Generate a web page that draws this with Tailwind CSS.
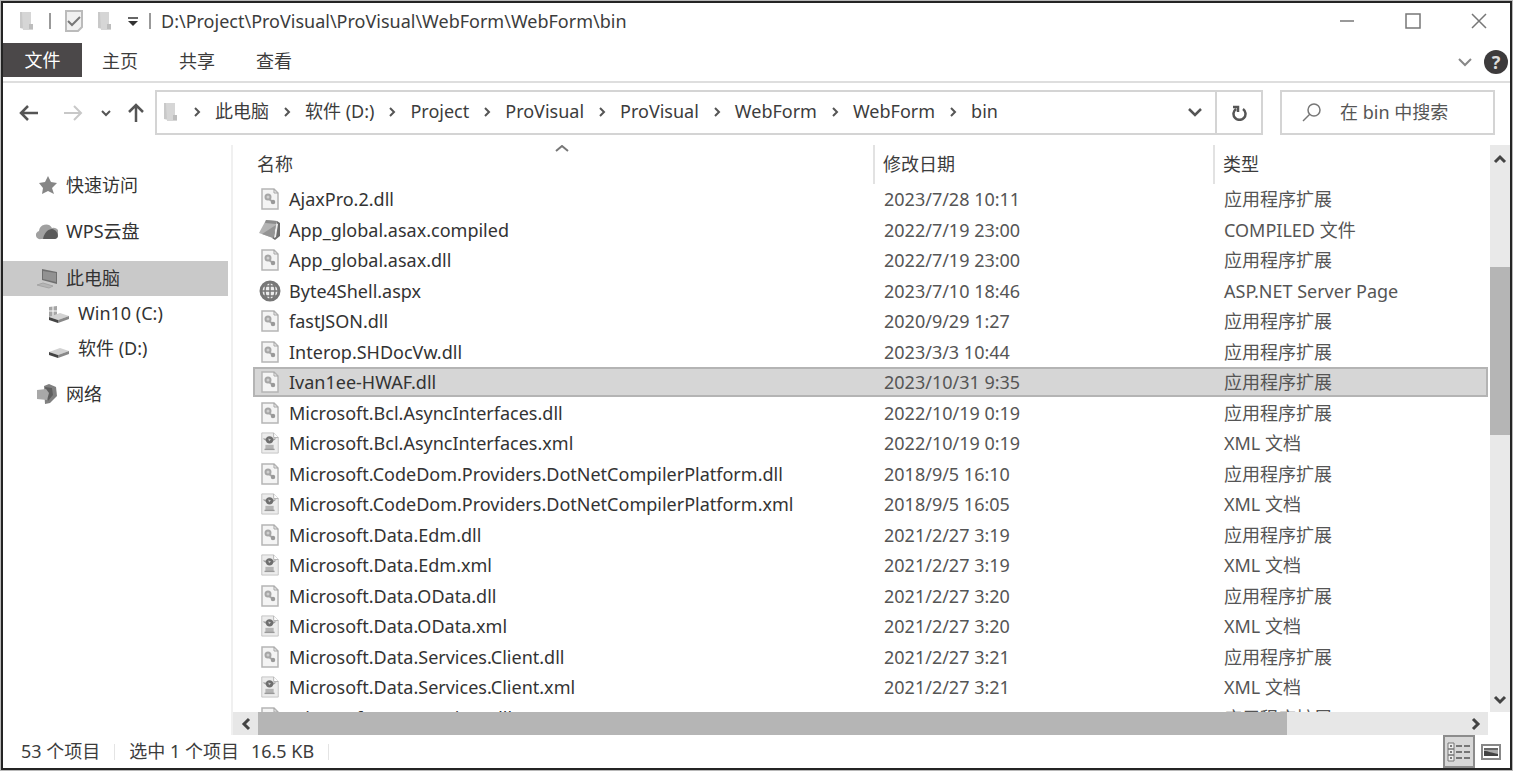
<!DOCTYPE html>
<html lang="zh-CN">
<head>
  <meta charset="utf-8"/>
  <meta name="viewport" content="width=device-width, initial-scale=1.0"/>
  <title>bin</title>
  <script src="https://cdn.jsdelivr.net/npm/@tailwindcss/browser@4"></script>
</head>
<body class="bg-[#b8b8b8] p-px text-[#3c3c3c] text-[18px] font-['Noto_Sans','Noto_Sans_CJK_SC',sans-serif]">

<svg class="hidden">
  <symbol id="icon-folder" viewBox="0 0 16 20">
    <path d="M1 1l9 0v18l-9-2z" fill="#c9c9c9"/>
    <path d="M3 1h9v12h2v6H4z" fill="#d6d6d6"/>
    <path d="M10 13h4v5h-4z" fill="#bdbdbd"/>
  </symbol>
  <symbol id="icon-dll" viewBox="0 0 22 22">
    <path d="M3 1h12l4 4v16H3z" fill="#f4f4f4" stroke="#b5b5b5" stroke-width="1.500"/>
    <path d="M15 1v4h4" fill="none" stroke="#a5a5a5"/>
    <circle cx="9" cy="9" r="2.500" fill="#cfcfcf" stroke="#a6a6a6" stroke-width="2"/>
    <path d="M10 11l4 3" stroke="#a6a6a6" stroke-width="2"/>
    <circle cx="14" cy="14" r="1.500" fill="#999" stroke="#9a9a9a" stroke-width="1.500"/>
  </symbol>
  <symbol id="icon-xml" viewBox="0 0 20 24">
    <path d="M1 1h13l5 5v17H1z" fill="#ececec" stroke="#c2c2c2"/>
    <path d="M14 1v5h5" fill="#fff" stroke="#b0b0b0"/>
    <path d="M2 7h15l-4 3H6z" fill="#9a9a9a"/>
    <circle cx="9.500" cy="8.500" r="4" fill="#6e6e6e"/>
    <path d="M8 7l3 1-2 2z" fill="#c8c8c8"/>
    <path d="M5 14h9v5H5z" fill="#b4b4b4"/>
    <path d="M4 19h11" stroke="#999" stroke-width="1.500"/>
  </symbol>
  <symbol id="icon-compiled" viewBox="0 0 22 22">
    <path d="M18 2l3 2v13l-5 4-3-2z" fill="#6c6c6c"/>
    <path d="M17 4l2 1-2 13-2 1z" fill="#eee"/>
    <path d="M7 1l11 1-4 17-14-5z" fill="#b4b4b4"/>
    <path d="M17 6l-3 13-11-4z" fill="#949494"/>
    <path d="M7 1l11 1-1 3-11-1z" fill="#8c8c8c"/>
  </symbol>
  <symbol id="icon-web" viewBox="0 0 22 22">
    <circle cx="11" cy="11" r="9" fill="#ececec" stroke="#777" stroke-width="3"/>
    <path d="M11 2v18M2 11h18M4 6h14M4 16h14" stroke="#777" stroke-width="1.500"/>
    <ellipse cx="11" cy="11" rx="5" ry="9" fill="none" stroke="#777" stroke-width="1.500"/>
  </symbol>
  <symbol id="icon-crumb" viewBox="0 0 8 10">
    <path d="M2 1l4 4-4 4" fill="none" stroke="#555" stroke-width="2"/>
  </symbol>
</svg>

<div class="flex h-[calc(100vh-2px)] flex-col overflow-hidden border-2 border-[#242424] bg-white">

  <!-- title bar -->
  <header class="flex h-10 shrink-0 items-center pb-1 pl-4">
    <svg class="h-5 w-4"><use href="#icon-folder"/></svg>
    <span class="ml-3.5 h-4 w-0.5 bg-[#999]"></span>
    <svg class="ml-3.5 h-[22px] w-[18px]" viewBox="0 0 18 22">
      <path d="M1 1h16v16l-4 4H1z" fill="#f0f0f0" stroke="#bbb" stroke-width="2"/>
      <path d="M3 11l4 4 8-8" fill="none" stroke="#777" stroke-width="2"/>
    </svg>
    <svg class="ml-3.5 h-5 w-4"><use href="#icon-folder"/></svg>
    <svg class="ml-3.5 h-3 w-3" viewBox="0 0 12 12"><path d="M1 3h10" stroke="#333" stroke-width="1.500"/><path d="M1 6h10l-5 5z" fill="#333"/></svg>
    <span class="ml-2.5 h-4 w-0.5 bg-[#999]"></span>
    <h1 class="ml-2.5 text-[18px]">D:\Project\ProVisual\ProVisual\WebForm\WebForm\bin</h1>
    <div class="ml-auto flex items-center gap-[50px] pr-[23px]">
      <button aria-label="最小化"><svg class="size-4" viewBox="0 0 16 16"><path d="M1 8h14" stroke="#777" stroke-width="1.500"/></svg></button>
      <button aria-label="最大化"><svg class="size-4" viewBox="0 0 16 16"><path d="M1 1h14v14H1z" fill="none" stroke="#777" stroke-width="1.500"/></svg></button>
      <button aria-label="关闭"><svg class="size-4" viewBox="0 0 16 16"><path d="M1 1l14 14M15 1L1 15" stroke="#777" stroke-width="1.500"/></svg></button>
    </div>
  </header>

  <!-- ribbon tabs -->
  <nav class="flex h-10 shrink-0 items-start border-b-2 border-[#dedede]">
    <button class="h-[34px] w-[79px] bg-[#4b4849] text-white">文件</button>
    <button class="ml-5 h-9">主页</button>
    <button class="ml-[41px] h-9">共享</button>
    <button class="ml-[41px] h-9">查看</button>
    <button class="mt-3 ml-auto" aria-label="展开功能区"><svg class="h-3.5 w-3.5" viewBox="0 0 14 14"><path d="M1 4l6 6 6-6" fill="none" stroke="#888" stroke-width="2"/></svg></button>
    <button class="mt-[7px] mr-0.5 ml-3 size-6 rounded-full bg-[#3d3b3c] text-[18px] leading-6 font-bold text-[#ddd]" aria-label="帮助">?</button>
  </nav>

  <!-- address bar -->
  <div class="flex h-[62px] shrink-0 items-start pt-[7px] pr-[15px]">
    <div class="flex h-[45px] w-[152px] shrink-0 items-center pl-4">
      <button aria-label="后退"><svg class="size-5" viewBox="0 0 20 20"><path d="M19 10H2M9 3l-7 7 7 7" fill="none" stroke="#555" stroke-width="2.500"/></svg></button>
      <button class="ml-6" aria-label="前进"><svg class="size-5" viewBox="0 0 20 20"><path d="M1 10h17M11 3l7 7-7 7" fill="none" stroke="#c8c8c8" stroke-width="2"/></svg></button>
      <button class="ml-[18px]" aria-label="最近位置"><svg class="size-2.5" viewBox="0 0 10 10"><path d="M1 3l4 4 4-4" fill="none" stroke="#555" stroke-width="2"/></svg></button>
      <button class="ml-[15px]" aria-label="上移"><svg class="size-5" viewBox="0 0 20 20"><path d="M10 19V2M3 9l7-7 7 7" fill="none" stroke="#555" stroke-width="2.500"/></svg></button>
    </div>
    <div class="flex h-[45px] flex-1 items-center border-2 border-[#d4d4d4] pb-0.5">
      <svg class="ml-1.5 h-5 w-4 shrink-0"><use href="#icon-folder"/></svg>
      <ol id="crumbs" class="flex items-center whitespace-nowrap"></ol>
      <button class="mr-3 ml-auto" aria-label="以前的位置"><svg class="size-4" viewBox="0 0 16 16"><path d="M2 5l6 6 6-6" fill="none" stroke="#555" stroke-width="2.500"/></svg></button>
      <button class="-mb-0.5 flex w-[46px] items-center justify-center self-stretch border-l-2 border-[#d4d4d4]" aria-label="刷新"><svg class="size-4" viewBox="0 0 16 16"><path d="M12 4a6 6 0 1 1-7 0M2 2h5v5" fill="none" stroke="#555" stroke-width="2.500"/></svg></button>
    </div>
    <label class="ml-[17px] flex h-[45px] w-[215px] items-center border-2 border-[#d4d4d4] pl-5">
      <svg class="size-5 shrink-0" viewBox="0 0 20 20"><circle cx="12" cy="7" r="6" fill="none" stroke="#777" stroke-width="1.500"/><path d="M8 11l-7 7" stroke="#777" stroke-width="1.500"/></svg>
      <input class="ml-[18px] w-36 outline-none placeholder:text-[#555]" type="text" placeholder="在 bin 中搜索" aria-label="搜索"/>
    </label>
  </div>

  <div class="flex min-h-0 flex-1">
    <!-- navigation pane -->
    <aside class="w-[228px] shrink-0 pt-[22px]">
      <a class="flex h-9 items-center gap-2 pl-[35px] text-[#333]" href="#">
        <svg class="size-5" viewBox="0 0 20 20"><path d="M10 1l3 6 6 1-5 5 2 6-6-3-6 3 1-6-4-5 6-1z" fill="#868686"/></svg>快速访问</a>
      <a class="mt-2.5 flex h-9 items-center gap-2 pl-[33px] text-[#333]" href="#">
        <svg class="h-5 w-[22px]" viewBox="0 0 22 20">
          <path d="M5 18a4 4 0 0 1-2-8 7 7 0 0 1 13-3 5 5 0 0 1 3 11z" fill="#a0a0a0"/>
          <path d="M7 18c1-6 5-10 9-10 6 1 8 9 3 10z" fill="#5a5a5a"/>
        </svg>WPS云盘</a>
      <a class="mt-3 mr-[3px] flex h-[35px] items-center gap-2 bg-[#c9c9c9] pl-[33px] text-[#333]" href="#">
        <svg class="h-5 w-[22px]" viewBox="0 0 22 20"><path d="M6 0l15 3v12L6 11z" fill="#6f6f6f"/><path d="M7 2l13 2v9L7 10z" fill="#929292"/><path d="M1 16l6-2 10 3-4 2z" fill="#b5b5b5" stroke="#a5a5a5"/></svg>此电脑</a>
      <a class="flex h-[35px] items-center gap-2 pl-[45px] text-[#333]" href="#">
        <svg class="h-5 w-[22px]" viewBox="0 0 22 20"><path d="M1 3l8-1v10l-8 1z" fill="#a5a5a5"/><path d="M5 2v10M1 7h8" stroke="#fff"/><path d="M1 13l11-4 9 3-11 4z" fill="#d2d2d2"/><path d="M1 13l9 3v3l-9-3z" fill="#444"/><path d="M10 16l11-4v3l-11 4z" fill="#888"/></svg>Win10 (C:)</a>
      <a class="flex h-[35px] items-center gap-2 pl-[45px] text-[#333]" href="#">
        <svg class="h-5 w-[22px]" viewBox="0 0 22 20"><path d="M1 13l11-4 9 3-11 4z" fill="#d2d2d2"/><path d="M1 13l9 3v3l-9-3z" fill="#444"/><path d="M10 16l11-4v3l-11 4z" fill="#888"/></svg>软件 (D:)</a>
      <a class="mt-2.5 flex h-9 items-center gap-2 pl-[33px] text-[#333]" href="#">
        <svg class="h-5 w-[22px]" viewBox="0 0 22 20"><path d="M8 2l5-2 7 3 1 9-7 7-5 1z" fill="#808080"/><path d="M9 3l7 1 1 7-5 6z" fill="#5f5f5f"/><path d="M1 6l9-1 3 4-2 7-10-1z" fill="#a8a8a8"/></svg>网络</a>
    </aside>

    <!-- file list -->
    <main class="flex min-w-0 flex-1 flex-col border-l-2 border-[#f0f0f0]">
      <div class="flex min-h-0 flex-1">
        <div class="relative min-w-0 flex-1 overflow-hidden pr-0.5 pl-5">
          <svg class="absolute top-0 left-[322px] h-2.5 w-3.5" viewBox="0 0 14 10"><path d="M1 6l6-5 6 5" fill="none" stroke="#777" stroke-width="2"/></svg>
          <table class="w-full table-fixed border-collapse text-left whitespace-nowrap">
            <thead>
              <tr class="h-[39px]">
                <th class="pl-1 font-normal">名称</th>
                <th class="w-[340px] border-l-2 border-[#e2e2e2] pl-2 font-normal">修改日期</th>
                <th class="w-[274px] border-l-2 border-[#e2e2e2] pl-2 font-normal">类型</th>
              </tr>
            </thead>
            <tbody id="files"></tbody>
          </table>
        </div>
        <div class="flex w-5 shrink-0 flex-col items-center bg-[#e9e9e9]">
          <button class="flex h-7 items-center" aria-label="向上滚动"><svg class="h-3 w-3.5" viewBox="0 0 14 12"><path d="M2 9l5-5 5 5" fill="none" stroke="#444" stroke-width="3"/></svg></button>
          <div class="mt-[94px] h-[168px] w-full bg-[#b5b5b5]"></div>
          <button class="mt-auto flex h-6 items-center" aria-label="向下滚动"><svg class="h-3 w-3.5" viewBox="0 0 14 12"><path d="M2 3l5 5 5-5" fill="none" stroke="#444" stroke-width="3"/></svg></button>
        </div>
      </div>
      <div class="mr-[22px] flex h-[23px] shrink-0 items-center bg-[#e7e7e7]">
        <button class="flex w-[25px] justify-center" aria-label="向左滚动"><svg class="h-3.5 w-3" viewBox="0 0 12 14"><path d="M9 2L4 7l5 5" fill="none" stroke="#444" stroke-width="3"/></svg></button>
        <div class="h-full w-[82%] bg-[#b5b5b5]"></div>
        <button class="mr-1.5 ml-auto" aria-label="向右滚动"><svg class="h-3.5 w-3" viewBox="0 0 12 14"><path d="M3 2l5 5-5 5" fill="none" stroke="#444" stroke-width="3"/></svg></button>
      </div>
    </main>
  </div>

  <!-- status bar -->
  <footer class="flex h-[33px] shrink-0 items-center pl-[18px]">
    <span>53 个项目</span>
    <span class="ml-3.5 h-4 w-px bg-[#e4e4e4]"></span>
    <span class="ml-3.5">选中 1 个项目</span>
    <span class="ml-3">16.5 KB</span>
    <span class="ml-3.5 h-4 w-px bg-[#e4e4e4]"></span>
    <button class="ml-auto flex h-full w-8 items-center justify-center border-2 border-[#8c8c8c] bg-[#d8d8d8]" aria-label="详细信息"><svg class="h-5 w-6" viewBox="0 0 24 20"><path d="M1 1h6v6H1zM1 7h6v6H1zM1 13h6v6H1z" fill="#eee" stroke="#777"/><path d="M3 4h2M3 10h2M3 16h2M9 4h6M17 4h6M9 10h6M17 10h6M9 16h6M17 16h6" stroke="#555" stroke-width="1.500"/></svg></button>
    <button class="mr-[9px] ml-1.5" aria-label="大缩略图"><svg class="h-4 w-5" viewBox="0 0 20 16"><path d="M1 1h18v14H1z" fill="#fff" stroke="#888" stroke-width="2"/><path d="M3 4h14v8H3z" fill="#aaa"/><path d="M3 4h14v2H3z" fill="#666"/><path d="M3 7c5 0 7 2 14 3v2H3z" fill="#444"/></svg></button>
  </footer>
</div>

<script>
  const crumbs = ['此电脑', '软件 (D:)', 'Project', 'ProVisual', 'ProVisual', 'WebForm', 'WebForm', 'bin'];
  document.getElementById('crumbs').innerHTML = crumbs.map(name => `
    <li class="flex items-center">
      <svg class="mx-3.5 h-2.5 w-2"><use href="#icon-crumb"/></svg>
      <a href="#">${name}</a>
    </li>`).join('');

  const types = { dll: '应用程序扩展', xml: 'XML 文档', compiled: 'COMPILED 文件', web: 'ASP.NET Server Page' };
  const files = [
    ['AjaxPro.2.dll', '2023/7/28 10:11', 'dll'],
    ['App_global.asax.compiled', '2022/7/19 23:00', 'compiled'],
    ['App_global.asax.dll', '2022/7/19 23:00', 'dll'],
    ['Byte4Shell.aspx', '2023/7/10 18:46', 'web'],
    ['fastJSON.dll', '2020/9/29 1:27', 'dll'],
    ['Interop.SHDocVw.dll', '2023/3/3 10:44', 'dll'],
    ['Ivan1ee-HWAF.dll', '2023/10/31 9:35', 'dll'],
    ['Microsoft.Bcl.AsyncInterfaces.dll', '2022/10/19 0:19', 'dll'],
    ['Microsoft.Bcl.AsyncInterfaces.xml', '2022/10/19 0:19', 'xml'],
    ['Microsoft.CodeDom.Providers.DotNetCompilerPlatform.dll', '2018/9/5 16:10', 'dll'],
    ['Microsoft.CodeDom.Providers.DotNetCompilerPlatform.xml', '2018/9/5 16:05', 'xml'],
    ['Microsoft.Data.Edm.dll', '2021/2/27 3:19', 'dll'],
    ['Microsoft.Data.Edm.xml', '2021/2/27 3:19', 'xml'],
    ['Microsoft.Data.OData.dll', '2021/2/27 3:20', 'dll'],
    ['Microsoft.Data.OData.xml', '2021/2/27 3:20', 'xml'],
    ['Microsoft.Data.Services.Client.dll', '2021/2/27 3:21', 'dll'],
    ['Microsoft.Data.Services.Client.xml', '2021/2/27 3:21', 'xml'],
    ['Microsoft.Data.Services.dll', '2021/2/27 3:21', 'dll']
  ];
  const selected = 'Ivan1ee-HWAF.dll';

  document.getElementById('files').innerHTML = files.map(([name, date, type]) => `
    <tr class="odd:h-[30px] even:h-[31px] ${name === selected ? 'bg-[#d6d6d6] outline-2 -outline-offset-2 outline-[#b4b4b4]' : ''}">
      <td class="p-0 leading-6 text-[#333]"><div class="flex items-center gap-2 pl-1.5"><svg class="size-[22px]"><use href="#icon-${type}"/></svg>${name}</div></td>
      <td class="py-0 pr-0 pl-2.5 leading-6 text-[#555]">${date}</td>
      <td class="py-0 pr-0 pl-2.5 leading-6 text-[#555]">${types[type]}</td>
    </tr>`).join('');
</script>

</body>
</html>
